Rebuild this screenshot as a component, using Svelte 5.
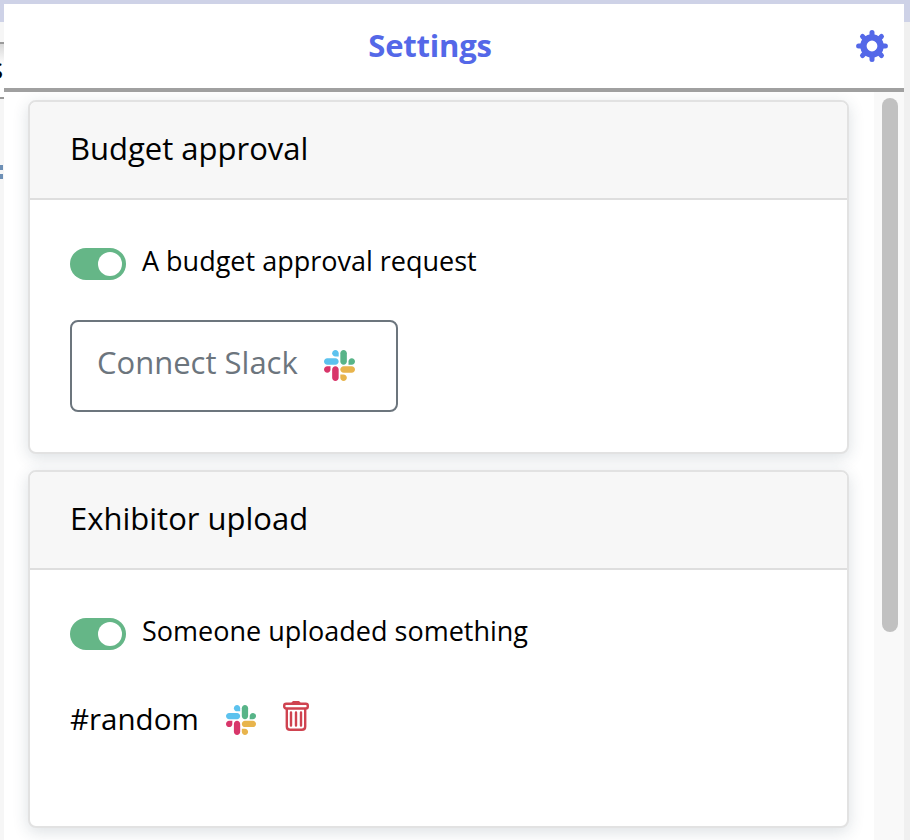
<script>
  const teeth = [0, 45, 90, 135, 180, 225, 270, 315];

  const sections = [
    { title: 'Budget approval', label: 'A budget approval request', channel: null },
    { title: 'Exhibitor upload', label: 'Someone uploaded something', channel: '#random' }
  ];
</script>

{#snippet slack()}
  <svg class="slack" viewBox="0 0 122.8 122.8" aria-hidden="true">
    <path d="M25.8 77.6c0 7.1-5.8 12.9-12.9 12.9S0 84.7 0 77.6s5.8-12.9 12.9-12.9h12.9v12.9z" fill="#d8366a" />
    <path d="M32.3 77.6c0-7.1 5.8-12.9 12.9-12.9s12.9 5.8 12.9 12.9v32.3c0 7.1-5.8 12.9-12.9 12.9s-12.9-5.8-12.9-12.9V77.6z" fill="#d8366a" />
    <path d="M45.2 25.8c-7.1 0-12.9-5.8-12.9-12.9S38.1 0 45.2 0s12.9 5.8 12.9 12.9v12.9H45.2z" fill="#5cc2ee" />
    <path d="M45.2 32.3c7.1 0 12.9 5.8 12.9 12.9s-5.8 12.9-12.9 12.9H12.9C5.8 58.1 0 52.3 0 45.2s5.8-12.9 12.9-12.9h32.3z" fill="#5cc2ee" />
    <path d="M97 45.2c0-7.1 5.8-12.9 12.9-12.9s12.9 5.8 12.9 12.9-5.8 12.9-12.9 12.9H97V45.2z" fill="#58b488" />
    <path d="M90.5 45.2c0 7.1-5.8 12.9-12.9 12.9s-12.9-5.8-12.9-12.9V12.9C64.7 5.8 70.5 0 77.6 0s12.9 5.8 12.9 12.9v32.3z" fill="#58b488" />
    <path d="M77.6 97c7.1 0 12.9 5.8 12.9 12.9s-5.8 12.9-12.9 12.9-12.9-5.8-12.9-12.9V97h12.9z" fill="#e8b44c" />
    <path d="M77.6 90.5c-7.1 0-12.9-5.8-12.9-12.9s5.8-12.9 12.9-12.9h32.3c7.1 0 12.9 5.8 12.9 12.9s-5.8 12.9-12.9 12.9H77.6z" fill="#e8b44c" />
  </svg>
{/snippet}

<div class="page">
  <!-- bits of the page behind the modal -->
  <div class="behind" aria-hidden="true">
    <div class="behind-top"></div>
    <div class="behind-side"></div>
    <div class="behind-bar"><span>s</span></div>
    <div class="behind-mark"></div>
  </div>

  <div class="panel">
    <header class="panel-header">
      <h1>Settings</h1>
      <svg class="gear" viewBox="-16 -16 32 32" aria-hidden="true">
        <circle r="8.6" />
        {#each teeth as angle}
          <line y1="-10" y2="-13.4" transform="rotate({angle})" />
        {/each}
      </svg>
    </header>

    <div class="panel-body">
      <div class="cards">
        {#each sections as section}
          <section class="card">
            <div class="card-header">{section.title}</div>
            <div class="card-body">
              <div class="toggle-row">
                <span class="toggle"><span class="knob"></span></span>
                <span class="toggle-label">{section.label}</span>
              </div>
              {#if section.channel}
                <div class="channel">
                  <span class="channel-name">{section.channel}</span>
                  {@render slack()}
                  <svg class="trash" viewBox="0 0 26 30" aria-hidden="true">
                    <rect x="1.200" y="2.800" width="23.600" height="4.700" rx="2" />
                    <path d="M9.500 2.500Q10 1 11.500 1h3q1.500 0 2 1.500" />
                    <path d="M3.800 8v17.500q0 3.300 3.300 3.300h11.800q3.300 0 3.300-3.300V8" />
                    <path d="M8 11.500v13M13 11.500v13M18 11.500v13" />
                  </svg>
                </div>
              {:else}
                <button class="connect" type="button">
                  <span class="connect-label">Connect Slack</span>
                  {@render slack()}
                </button>
              {/if}
            </div>
          </section>
        {/each}
      </div>
      <div class="scrollbar"><div class="thumb"></div></div>
    </div>
  </div>
</div>

<style>
  :global(body) {
    margin: 0;
  }

  .page {
    position: relative;
    width: 910px;
    height: 840px;
    overflow: hidden;
    background: #f0f0f0;
    font-family: "Open Sans", Lato, sans-serif;
    color: #000;
  }

  .behind-top {
    position: absolute;
    inset: 0 0 auto 0;
    height: 22px;
    background: #ced2e7;
  }

  .behind-side {
    position: absolute;
    left: 0;
    top: 22px;
    width: 4px;
    bottom: 0;
    background: #f6f6f6;
  }

  .behind-bar {
    position: absolute;
    left: 0;
    top: 42px;
    width: 4px;
    height: 57px;
    box-sizing: border-box;
    background: linear-gradient(#d8d8d8, #fff 40%);
    border-top: 2px solid #9a9a9a;
    border-bottom: 2px solid #9a9a9a;
    overflow: hidden;
  }

  .behind-bar span {
    display: block;
    margin-left: -11px;
    margin-top: 6px;
    font-size: 30px;
    line-height: 36px;
  }

  .behind-mark {
    position: absolute;
    left: 0;
    top: 165px;
    width: 3px;
    height: 18px;
    background: repeating-linear-gradient(#6d8fb5 0 5px, transparent 5px 9px);
  }

  .panel {
    position: absolute;
    left: 4px;
    top: 4px;
    width: 900px;
    height: 836px;
    background: #fff;
    display: flex;
    flex-direction: column;
  }

  .panel-header {
    flex: none;
    height: 84px;
    padding-right: 16px;
    display: flex;
    align-items: center;
    border-bottom: 4px solid #a0a0a0;
  }

  h1 {
    flex: 1;
    margin: 0 0 2px;
    text-align: center;
    font-size: 31px;
    font-weight: 700;
    letter-spacing: -0.2px;
    color: #5468e8;
  }

  .gear {
    flex: none;
    width: 32px;
    height: 32px;
  }

  .gear circle {
    fill: none;
    stroke: #5468e8;
    stroke-width: 6.400;
  }

  .gear line {
    stroke: #5468e8;
    stroke-width: 5;
    stroke-linecap: round;
  }

  .panel-body {
    flex: 1;
    min-height: 0;
    display: flex;
    overflow: hidden;
  }

  .cards {
    flex: 1;
    min-width: 0;
    padding: 8px 25px 0 24px;
    display: flex;
    flex-direction: column;
    gap: 16px;
  }

  .card {
    flex: none;
    border: 2px solid #e2e2e2;
    border-radius: 8px;
    background: #fff;
    box-shadow: 0 4px 16px rgba(40, 60, 80, 0.16);
    overflow: hidden;
  }

  .card-header {
    height: 92px;
    padding: 0 40px 4px;
    display: flex;
    align-items: center;
    background: #f7f7f7;
    border-bottom: 2px solid #dedede;
    font-size: 31px;
  }

  .card-body {
    padding: 48px 40px 40px;
    font-size: 27px;
  }

  .card:last-child .card-body {
    padding-bottom: 88px;
  }

  .toggle-row {
    display: flex;
    align-items: center;
    gap: 16px;
    height: 32px;
    margin-bottom: 40px;
  }

  .toggle-label {
    margin-top: -8px;
  }

  .toggle {
    width: 56px;
    height: 32px;
    border-radius: 16px;
    background: #65b687;
    display: flex;
    align-items: center;
    justify-content: flex-end;
    padding-right: 4px;
    box-sizing: border-box;
  }

  .knob {
    width: 24px;
    height: 24px;
    border-radius: 50%;
    background: #fff;
  }

  .connect {
    width: 328px;
    height: 92px;
    padding: 0 0 0 25px;
    display: flex;
    align-items: center;
    gap: 26px;
    background: #fff;
    border: 2px solid #6c757d;
    border-radius: 8px;
    color: #6c757d;
    font: inherit;
    font-size: 31px;
  }

  .connect-label {
    margin-top: -8px;
  }

  .connect .slack {
    margin-top: -2px;
  }

  .slack {
    width: 31px;
    height: 31px;
    flex: none;
  }

  .channel {
    display: flex;
    align-items: center;
    gap: 27px;
    height: 36px;
    margin-top: 52px;
    font-size: 29.500px;
  }

  .channel .slack {
    width: 30px;
    height: 30px;
  }

  .channel-name {
    margin-top: -4px;
  }

  .trash {
    width: 26px;
    height: 30px;
    margin-top: -8px;
    fill: none;
    stroke: #cf4350;
    stroke-width: 2.400;
    stroke-linecap: round;
  }

  .scrollbar {
    flex: none;
    width: 30px;
    padding: 6px 6px 0 8px;
    box-sizing: border-box;
    background: #f9f9f9;
  }

  .thumb {
    width: 16px;
    height: 534px;
    border-radius: 8px;
    background: #c1c1c1;
  }
</style>
